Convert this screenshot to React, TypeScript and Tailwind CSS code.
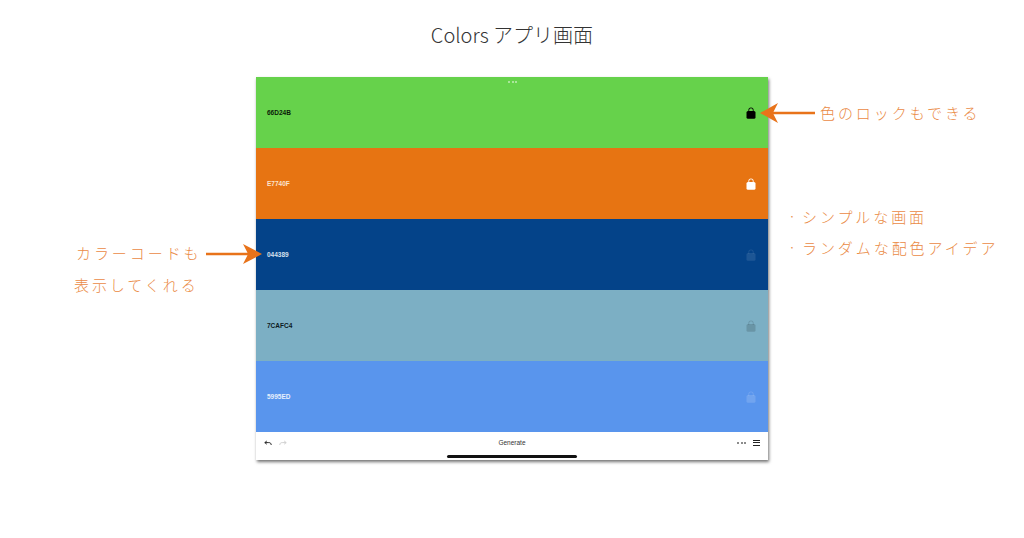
const SANS = 'font-["Liberation_Sans",Arial,sans-serif]'

const bands = [
  { hex: '66D24B', bg: 'bg-[#66d24b]', text: 'text-[#0b1a08]', lock: 'text-black' },
  { hex: 'E7740F', bg: 'bg-[#e77412]', text: 'text-[#fbe3cd]', lock: 'text-white' },
  { hex: '044389', bg: 'bg-[#044389]', text: 'text-[#d5e0ee]', lock: 'text-white/10' },
  { hex: '7CAFC4', bg: 'bg-[#7cafc4]', text: 'text-[#0c1a22]', lock: 'text-black/15' },
  { hex: '5995ED', bg: 'bg-[#5995ed]', text: 'text-[#e6effc]', lock: 'text-white/15' },
]

function Lock({ className }: { className: string }) {
  return (
    <svg viewBox="0 0 10 12" className={`h-3 w-[10px] ${className}`} fill="currentColor">
      <path d="M2.4 5V3a2.6 2.6 0 0 1 5.2 0V5H6.8V3a1.8 1.8 0 0 0-3.6 0V5Z" />
      <rect x="0.5" y="4" width="9" height="7.8" rx="1.5" />
    </svg>
  )
}

function ArrowLeft() {
  return (
    <svg viewBox="0 0 56 20" className="h-5 w-14 text-[#e8731a]" fill="currentColor">
      <path d="M0 10 18 0 13.5 8.7H55V11.3H13.5L18 20Z" />
    </svg>
  )
}

function ArrowRight() {
  return (
    <svg viewBox="0 0 56 20" className="h-5 w-14 text-[#e8731a]" fill="currentColor">
      <path d="M56 10 37 0 41.5 8.7H0V11.3H41.5L37 20Z" />
    </svg>
  )
}

function Note({ children, className }: { children: string; className: string }) {
  return (
    <div className={`absolute whitespace-nowrap text-[15px] leading-5 font-light tracking-[0.195em] text-[#ea8a45] ${className}`}>
      {children}
    </div>
  )
}

export default function App() {
  return (
    <div className='relative h-[538px] w-[1024px] overflow-hidden bg-white font-["Noto_Sans_CJK_JP","Noto_Sans",sans-serif]'>
      <h1 className="flex h-[77px] items-start justify-center pt-[21px] text-[20px] leading-7 font-light text-[#333333]">
        Colors アプリ画面
      </h1>

      <div className={`relative mx-auto flex h-[383px] w-[512px] flex-col shadow-[1px_2px_3px_rgba(0,0,0,0.55)] ${SANS}`}>
        {bands.map((b) => (
          <div key={b.hex} className={`flex h-[71px] items-center justify-between pr-3 pl-[11px] ${b.bg}`}>
            <span className={`pt-px text-[6.5px] font-bold ${b.text}`}>{b.hex}</span>
            <Lock className={b.lock} />
          </div>
        ))}

        <div className="relative flex h-7 items-center bg-white px-[8px] pb-[7px]">
          <div className="flex w-24 items-center gap-[7px]">
            <svg viewBox="0 0 10 7" className="h-[6px] w-[8px] text-[#222222]" fill="none" stroke="currentColor" strokeWidth="1.2">
              <path d="M3.5 1 1 3l2.5 2M1 3h5c2 0 3 1 3 3" />
            </svg>
            <svg viewBox="0 0 10 7" className="h-[6px] w-[8px] text-[#cfcfcf]" fill="none" stroke="currentColor" strokeWidth="1.2">
              <path d="M6.5 1 9 3 6.5 5M9 3H4C2 3 1 4 1 6" />
            </svg>
          </div>
          <span className="flex-1 pt-[2px] text-center text-[6.5px] leading-none font-medium text-[#333333]">Generate</span>
          <div className="flex w-24 items-center justify-end gap-[7px]">
            <div className="flex gap-[1.5px]">
              <span className="h-[2px] w-[2px] rounded-full bg-[#666666]" />
              <span className="h-[2px] w-[2px] rounded-full bg-[#666666]" />
              <span className="h-[2px] w-[2px] rounded-full bg-[#666666]" />
            </div>
            <div className="flex w-[7px] flex-col gap-[1.5px]">
              <span className="h-px bg-[#222222]" />
              <span className="h-px bg-[#222222]" />
              <span className="h-px bg-[#222222]" />
            </div>
          </div>
          <div className="absolute bottom-[2px] left-[191px] h-[3px] w-[130px] rounded-full bg-[#111111]" />
        </div>

        <div className="absolute top-[4px] left-[252px] flex gap-[1.5px]">
          <span className="h-[2px] w-[2px] rounded-full bg-white/60" />
          <span className="h-[2px] w-[2px] rounded-full bg-white/60" />
          <span className="h-[2px] w-[2px] rounded-full bg-white/60" />
        </div>
      </div>

      <div className="absolute top-[103px] left-[760px]">
        <ArrowLeft />
      </div>
      <Note className="top-[103px] left-[820px]">色のロックもできる</Note>
      <Note className="top-[206px] left-[788px]">·</Note>
      <Note className="top-[207px] left-[802px]">シンプルな画面</Note>
      <Note className="top-[237px] left-[788px]">·</Note>
      <Note className="top-[238px] left-[802px]">ランダムな配色アイデア</Note>

      <div className="absolute top-[244px] left-[206px]">
        <ArrowRight />
      </div>
      <Note className="top-[243px] left-[76px]">カラーコードも</Note>
      <Note className="top-[275px] left-[74px]">表示してくれる</Note>
    </div>
  )
}
